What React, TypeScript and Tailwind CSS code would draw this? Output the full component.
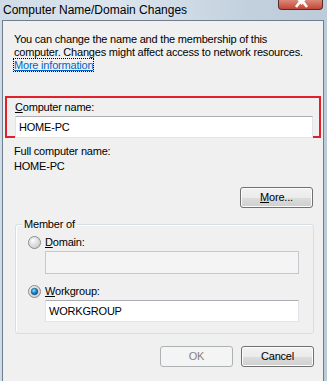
import React from "react";

function Radio({ checked }: { checked?: boolean }) {
  return (
    <svg width="13" height="13" viewBox="0 0 13 13" className="shrink-0">
      <defs>
        <radialGradient id={checked ? "rgc" : "rgu"} cx="0.35" cy="0.3" r="0.8">
          <stop offset="0" stopColor="#ffffff" />
          <stop offset="1" stopColor="#c4c4c4" />
        </radialGradient>
        <radialGradient id="dot" cx="0.4" cy="0.35" r="0.7">
          <stop offset="0" stopColor="#8fe0ff" />
          <stop offset="0.5" stopColor="#1b8fd6" />
          <stop offset="1" stopColor="#0b3e78" />
        </radialGradient>
      </defs>
      <circle cx="6.5" cy="6.5" r="6" fill={`url(#${checked ? "rgc" : "rgu"})`} stroke="#8a8a8a" strokeWidth="1" />
      <circle cx="6.5" cy="6.5" r="4.6" fill="none" stroke="#d8d8d8" strokeWidth="0.8" />
      {checked && <circle cx="6.5" cy="6.5" r="3.3" fill="url(#dot)" stroke="#1a4c7a" strokeWidth="0.6" />}
    </svg>
  );
}

function Btn({ children, disabled, className }: { children: React.ReactNode; disabled?: boolean; className?: string }) {
  return (
    <div
      className={
        (disabled
          ? "border-[#adb2b5] bg-[#f4f4f4] text-[#838383] "
          : "border-[#707070] bg-[linear-gradient(#f2f2f2_0%,#ebebeb_50%,#dddddd_50%,#cfcfcf_100%)] shadow-[inset_0_0_0_1px_#fcfcfc] text-black ") +
        "h-[21px] w-[73px] rounded-[3px] border flex items-center justify-center text-[11px] " +
        (className ?? "")
      }
    >
      {children}
    </div>
  );
}

export default function App() {
  return (
    <div className="w-[327px] h-[381px] overflow-hidden relative bg-[linear-gradient(90deg,#cfdbe6,#dce5ee_35%,#c3d1de_75%,#bccbd9)] font-['Liberation_Sans',Arial,sans-serif] text-black">
      {/* title bar */}
      <div className="h-[20px] flex items-center pl-[3px] text-[12px] text-black leading-none">
        Computer Name/Domain Changes
      </div>
      {/* close button */}
      <div className="absolute left-[278px] top-0 w-[45px] h-[10px] rounded-b-[4px] border border-t-0 border-[#5a2a2a] bg-[linear-gradient(#d98a78,#c4453a)] overflow-hidden">
        <svg width="45" height="10" viewBox="0 0 45 10" className="block">
          <path d="M17 -4 L22.5 3 L28 -4 M17 7 L22.5 0" stroke="#ffffff" strokeWidth="2.6" fill="none" />
          <path d="M28 7 L22.5 0" stroke="#ffffff" strokeWidth="2.6" fill="none" />
        </svg>
      </div>

      {/* client area */}
      <div className="ml-[2px] w-[322px] h-[361px] border border-b-0 border-[#6f7e8c] bg-[#f0f0f0] tracking-[-0.2px]">
        <div className="pl-[11px] pt-[12px] text-[11px] leading-[13px]">
          <p>You can change the name and the membership of this</p>
          <p>computer. Changes might affect access to network resources.</p>
          <span className="inline-block text-[#0066cc] underline outline-1 outline-dotted outline-black leading-[12px]">
            More information
          </span>
        </div>

        {/* red highlight box */}
        <div className="mt-[24px] ml-[2px] w-[316px] h-[42px] border-2 border-[#e0202a] pl-[8px] pt-[3px]">
          <div className="text-[11px] leading-[13px]">
            <span className="underline">C</span>omputer name:
          </div>
          <div className="mt-[2px] w-[298px] h-[22px] bg-white border border-[#e2e3ea] border-t-[#abadb3] flex items-center pl-[3px] text-[11px]">
            HOME-PC
          </div>
        </div>

        <div className="pl-[11px] mt-[6px] text-[11px] leading-[15px]">
          <div>Full computer name:</div>
          <div>HOME-PC</div>
        </div>

        <div className="flex justify-end pr-[10px] mt-[13px]">
          <Btn>
            <span>
              <span className="underline">M</span>ore...
            </span>
          </Btn>
        </div>

        {/* group box */}
        <div className="relative ml-[12px] mt-[16px] w-[299px] h-[110px] rounded-[3px] border border-[#d5dfe5] shadow-[inset_1px_1px_0_#ffffff]">
          <div className="absolute -top-[8px] left-[6px] px-[2px] bg-[#f0f0f0] text-[11px] leading-[14px]">
            Member of
          </div>
          <div className="pl-[12px] pt-[11px]">
            <div className="flex items-center gap-[4px] h-[13px] text-[11px]">
              <Radio />
              <span>
                <span className="underline">D</span>omain:
              </span>
            </div>
            <div className="ml-[17px] mt-[2px] w-[254px] h-[23px] border border-[#c5c9cd] bg-[#f4f4f4]" />
            <div className="flex items-center gap-[4px] h-[13px] mt-[11px] text-[11px]">
              <Radio checked />
              <span>
                <span className="underline">W</span>orkgroup:
              </span>
            </div>
            <div className="ml-[17px] mt-[2px] w-[254px] h-[22px] bg-white border border-[#e2e3ea] border-t-[#abadb3] flex items-center pl-[3px] text-[11px]">
              WORKGROUP
            </div>
          </div>
        </div>

        <div className="flex justify-end gap-[8px] pr-[9px] mt-[12px]">
          <Btn disabled>OK</Btn>
          <Btn>Cancel</Btn>
        </div>
      </div>
    </div>
  );
}
